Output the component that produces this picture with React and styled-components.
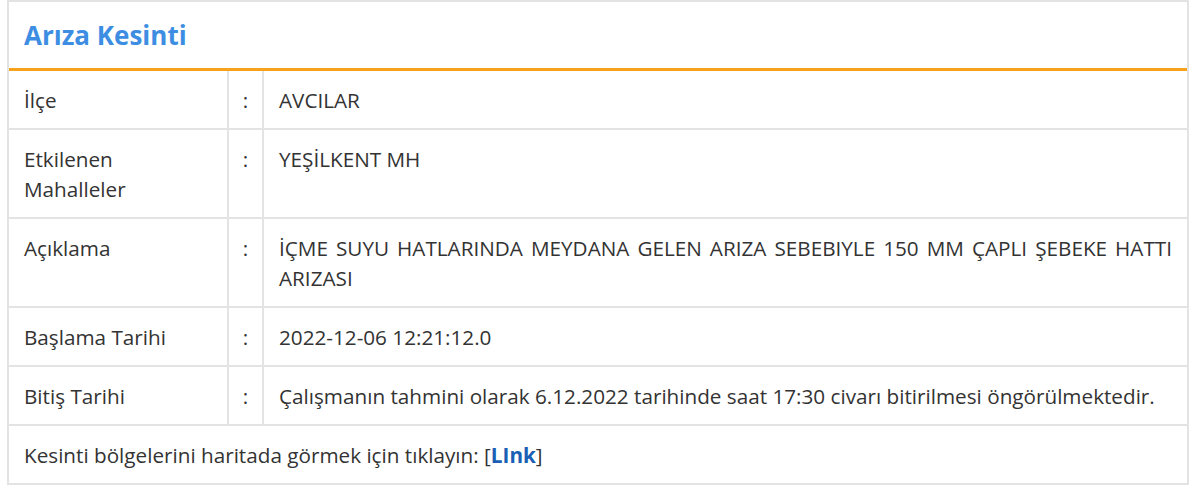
import React from "react";
import styled, { createGlobalStyle } from "styled-components";

const rows = [
  { label: "İlçe", value: "AVCILAR" },
  { label: "Etkilenen Mahalleler", value: "YEŞİLKENT MH" },
  {
    label: "Açıklama",
    value:
      "İÇME SUYU HATLARINDA MEYDANA GELEN ARIZA SEBEBIYLE 150 MM ÇAPLI ŞEBEKE HATTI ARIZASI",
  },
  { label: "Başlama Tarihi", value: "2022-12-06 12:21:12.0" },
  {
    label: "Bitiş Tarihi",
    value:
      "Çalışmanın tahmini olarak 6.12.2022 tarihinde saat 17:30 civarı bitirilmesi öngörülmektedir.",
  },
];

export default function App() {
  return (
    <>
      <GlobalStyle />
      <Panel>
        <Header>
          <Title>Arıza Kesinti</Title>
        </Header>
        <Table>
          <tbody>
            {rows.map((row) => (
              <tr key={row.label}>
                <Label>{row.label}</Label>
                <Colon>:</Colon>
                <Value>{row.value}</Value>
              </tr>
            ))}
            <tr>
              <Footer colSpan={3}>
                Kesinti bölgelerini haritada görmek için tıklayın: [
                <LinkText href="#">LInk</LinkText>]
              </Footer>
            </tr>
          </tbody>
        </Table>
      </Panel>
    </>
  );
}

const GlobalStyle = createGlobalStyle`
  body {
    margin: 0;
    background: #ffffff;
    font-family: "Open Sans", "Noto Sans", sans-serif;
    color: #333333;
  }
`;

const Panel = styled.div`
  margin: 0 11px 0 7px;
  border: 2px solid #e3e3e3;
  background: #ffffff;
`;

const Header = styled.div`
  height: 66px;
  display: flex;
  align-items: center;
  padding: 0 15px;
  border-bottom: 3px solid #f7a21b;
`;

const Title = styled.h3`
  margin: 0;
  font-size: 26px;
  font-weight: 700;
  color: #3d8ee3;
`;

const Table = styled.table`
  width: 100%;
  border-collapse: collapse;
  font-size: 20.7px;
  line-height: 30px;

  tr {
    border-bottom: 2px solid #e3e3e3;
  }
  tr:last-child {
    border-bottom: none;
  }
`;

const Cell = styled.td`
  vertical-align: top;
  padding: 14px 15px 13px;
`;

const Label = styled(Cell)`
  width: 188px;
  border-right: 2px solid #e3e3e3;
`;

const Colon = styled(Cell)`
  width: 33px;
  padding-left: 0;
  padding-right: 0;
  text-align: center;
  border-right: 2px solid #e3e3e3;
`;

const Value = styled(Cell)`
  text-align: justify;
`;

const Footer = styled(Cell)``;

const LinkText = styled.a`
  color: #1a5fb4;
  font-weight: 700;
  text-decoration: none;
`;
